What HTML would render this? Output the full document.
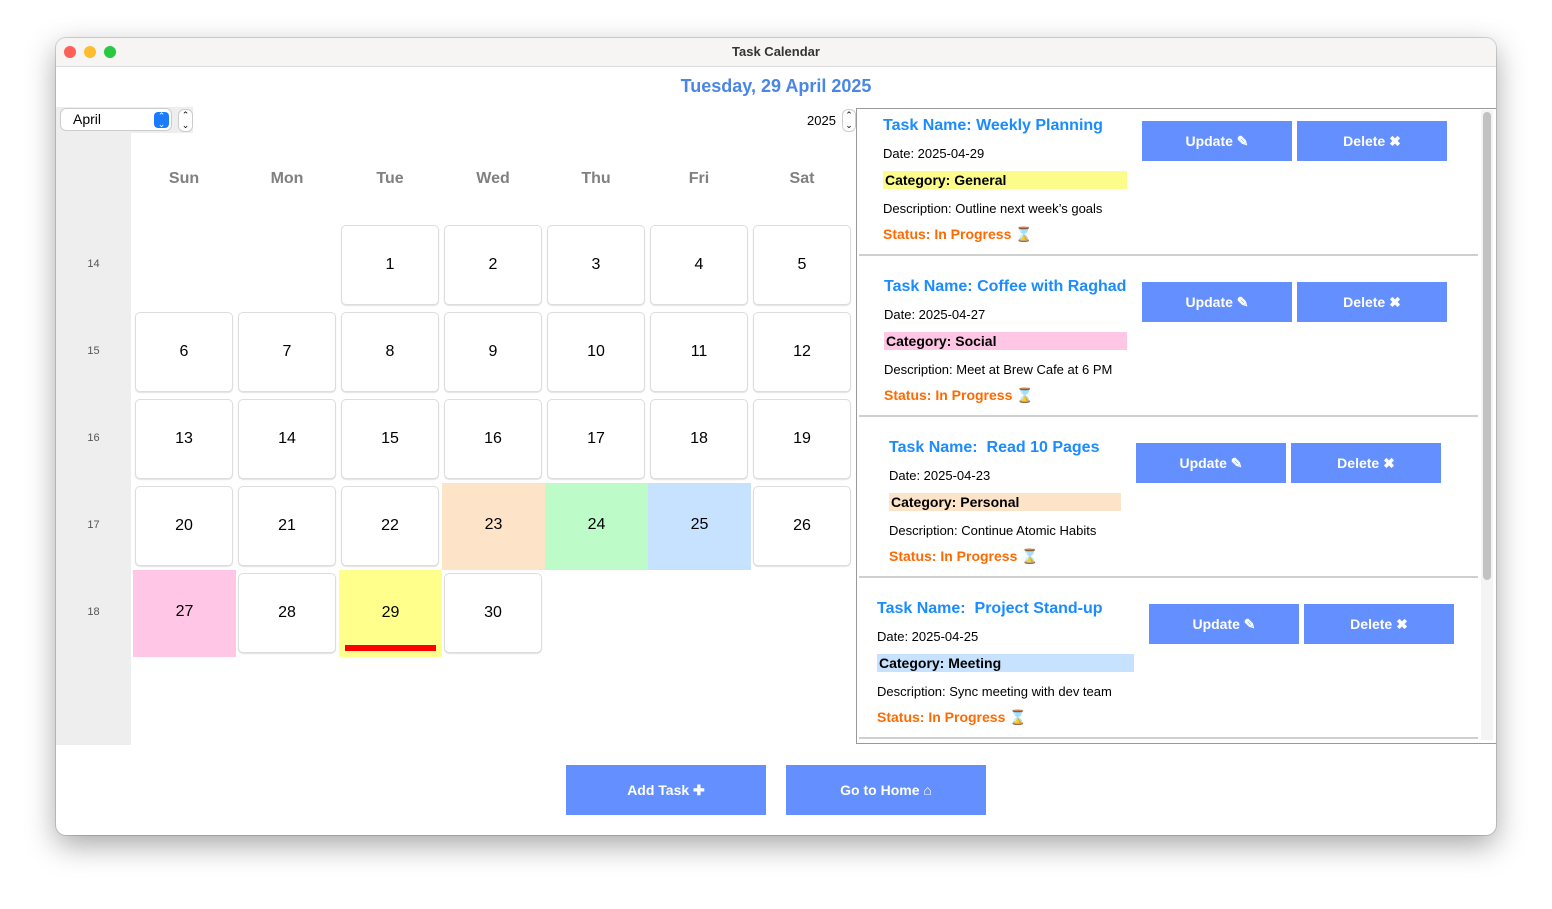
<!DOCTYPE html>
<html><head><meta charset="utf-8"><style>
*{margin:0;padding:0;box-sizing:border-box}
body{width:1552px;height:909px;background:#fff;position:relative;font-family:"Liberation Sans",sans-serif;overflow:hidden}
.win{position:absolute;left:56px;top:38px;width:1440px;height:797px;background:#fff;border-radius:10px;box-shadow:0 10px 30px rgba(0,0,0,.35),0 0 0 1px rgba(0,0,0,.15);overflow:hidden}
.tb{position:absolute;left:0;top:0;width:1440px;height:29px;background:#f6f5f3;border-bottom:1px solid #dcdcdc;text-align:center;font-size:13px;font-weight:bold;color:#333;line-height:28px}
.dot{position:absolute;top:8px;width:12px;height:12px;border-radius:50%}
.a{position:absolute}
.cell{position:absolute;width:98px;height:80px;border:1px solid #ddd;border-radius:5px;background:#fff;box-shadow:0 1px 1px rgba(0,0,0,.12);text-align:center;line-height:78px;font-size:16px;color:#000}
.fill{position:absolute;width:103px;height:87px;text-align:center;line-height:84px;font-size:16px}
.dh{position:absolute;top:170px;width:98px;text-align:center;font-size:16px;font-weight:bold;color:#808080}
.wk{position:absolute;left:0;width:75px;text-align:center;font-size:11px;color:#555}
.tn{position:absolute;font-size:16px;font-weight:bold;color:#1a8cff}
.t{position:absolute;font-size:13px;color:#000}
.cat{position:absolute;height:18px;font-size:14px;font-weight:bold;padding-left:2px;line-height:18px}
.st{position:absolute;font-size:14px;font-weight:bold;color:#ff6a00}
.btn{position:absolute;width:150px;height:40px;background:#648ffe;color:#fff;font-weight:bold;font-size:14px;text-align:center;line-height:40px}
.sep{position:absolute;left:859px;width:619px;height:2px;background:#d0d0d0}
</style></head><body>
<div class="win">
<div class="tb">Task Calendar
<div class="dot" style="left:8px;background:#fe5f57"></div>
<div class="dot" style="left:28px;background:#febc2e"></div>
<div class="dot" style="left:48px;background:#28c840"></div>
</div>
</div>
<div class="a" style="left:0;top:76px;width:1552px;text-align:center;font-size:18px;font-weight:bold;color:#4a86e8">Tuesday, 29 April 2025</div>
<div class="a" style="left:56px;top:107px;width:137px;height:26px;background:#eee"></div>
<div class="a" style="left:56px;top:133px;width:75px;height:612px;background:#eee"></div>
<div class="a" style="left:61px;top:109px;width:110px;height:21px;background:#fff;border-radius:5px;box-shadow:0 0 0 1px #ccc;font-size:14px;line-height:21px;padding-left:12px">April</div>
<div class="a" style="left:154px;top:112px;width:15px;height:16px;background:#1a7cfa;border-radius:4px;color:#fff;font-size:9px;text-align:center;line-height:8px">⌃<br>⌄</div>
<div class="a" style="left:179px;top:110px;width:13px;height:21px;background:#fff;border-radius:5px;box-shadow:0 0 0 1px #ccc;font-size:9px;text-align:center;line-height:10px">⌃<br>⌄</div>
<div class="a" style="left:807px;top:113px;font-size:13px">2025</div>
<div class="a" style="left:843px;top:110px;width:12px;height:21px;background:#fff;border-radius:5px;box-shadow:0 0 0 1px #ccc;font-size:9px;text-align:center;line-height:10px">⌃<br>⌄</div>

<div class="dh" style="left:135px">Sun</div><div class="dh" style="left:238px">Mon</div><div class="dh" style="left:341px">Tue</div><div class="dh" style="left:444px">Wed</div><div class="dh" style="left:547px">Thu</div><div class="dh" style="left:650px">Fri</div><div class="dh" style="left:753px">Sat</div>
<div class="wk" style="left:56px;top:258px">14</div><div class="wk" style="left:56px;top:345px">15</div><div class="wk" style="left:56px;top:432px">16</div><div class="wk" style="left:56px;top:519px">17</div><div class="wk" style="left:56px;top:606px">18</div>

<div class="cell" style="left:341px;top:225px">1</div><div class="cell" style="left:444px;top:225px">2</div><div class="cell" style="left:547px;top:225px">3</div><div class="cell" style="left:650px;top:225px">4</div><div class="cell" style="left:753px;top:225px">5</div>
<div class="cell" style="left:135px;top:312px">6</div><div class="cell" style="left:238px;top:312px">7</div><div class="cell" style="left:341px;top:312px">8</div><div class="cell" style="left:444px;top:312px">9</div><div class="cell" style="left:547px;top:312px">10</div><div class="cell" style="left:650px;top:312px">11</div><div class="cell" style="left:753px;top:312px">12</div>
<div class="cell" style="left:135px;top:399px">13</div><div class="cell" style="left:238px;top:399px">14</div><div class="cell" style="left:341px;top:399px">15</div><div class="cell" style="left:444px;top:399px">16</div><div class="cell" style="left:547px;top:399px">17</div><div class="cell" style="left:650px;top:399px">18</div><div class="cell" style="left:753px;top:399px">19</div>
<div class="cell" style="left:135px;top:486px">20</div><div class="cell" style="left:238px;top:486px">21</div><div class="cell" style="left:341px;top:486px">22</div>
<div class="fill" style="left:442px;top:483px;background:#fde3c8">23</div>
<div class="fill" style="left:545px;top:483px;background:#bdfcc9">24</div>
<div class="fill" style="left:648px;top:483px;background:#c7e2fe">25</div>
<div class="cell" style="left:753px;top:486px">26</div>
<div class="fill" style="left:133px;top:570px;background:#ffc6e6">27</div>
<div class="cell" style="left:238px;top:573px">28</div>
<div class="fill" style="left:339px;top:570px;background:#ffff8c;line-height:86px">29<div class="a" style="left:6px;top:75px;width:91px;height:6px;background:#f00"></div></div>
<div class="cell" style="left:444px;top:573px">30</div>

<div class="a" style="left:856px;top:108px;width:640px;height:636px;border:1px solid #999;border-right:none;background:#fff"></div>
<div class="a" style="left:1481px;top:110px;width:12px;height:630px;background:#f4f4f4"></div>
<div class="a" style="left:1483px;top:112px;width:8px;height:468px;background:#c2c2c2;border-radius:4px"></div>
<div class="sep" style="top:254px"></div><div class="sep" style="top:415px"></div><div class="sep" style="top:576px"></div><div class="sep" style="top:737px"></div>

<div class="tn" style="left:883px;top:117px">Task Name: Weekly Planning</div>
<div class="t" style="left:883px;top:146px">Date: 2025-04-29</div>
<div class="cat" style="left:883px;top:171px;width:244px;background:#fcfc8b">Category: General</div>
<div class="t" style="left:883px;top:201px">Description: Outline next week’s goals</div>
<div class="st" style="left:883px;top:226px">Status: In Progress ⌛</div>
<div class="btn" style="left:1142px;top:121px">Update ✎</div><div class="btn" style="left:1297px;top:121px">Delete ✖</div>

<div class="tn" style="left:884px;top:278px">Task Name: Coffee with Raghad</div>
<div class="t" style="left:884px;top:307px">Date: 2025-04-27</div>
<div class="cat" style="left:884px;top:332px;width:243px;background:#ffc6e6">Category: Social</div>
<div class="t" style="left:884px;top:362px">Description: Meet at Brew Cafe at 6 PM</div>
<div class="st" style="left:884px;top:387px">Status: In Progress ⌛</div>
<div class="btn" style="left:1142px;top:282px">Update ✎</div><div class="btn" style="left:1297px;top:282px">Delete ✖</div>

<div class="tn" style="left:889px;top:439px">Task Name:&nbsp; Read 10 Pages</div>
<div class="t" style="left:889px;top:468px">Date: 2025-04-23</div>
<div class="cat" style="left:889px;top:493px;width:232px;background:#fde3c8">Category: Personal</div>
<div class="t" style="left:889px;top:523px">Description: Continue Atomic Habits</div>
<div class="st" style="left:889px;top:548px">Status: In Progress ⌛</div>
<div class="btn" style="left:1136px;top:443px">Update ✎</div><div class="btn" style="left:1291px;top:443px">Delete ✖</div>

<div class="tn" style="left:877px;top:600px">Task Name:&nbsp; Project Stand-up</div>
<div class="t" style="left:877px;top:629px">Date: 2025-04-25</div>
<div class="cat" style="left:877px;top:654px;width:257px;background:#c7e2fe">Category: Meeting</div>
<div class="t" style="left:877px;top:684px">Description: Sync meeting with dev team</div>
<div class="st" style="left:877px;top:709px">Status: In Progress ⌛</div>
<div class="btn" style="left:1149px;top:604px">Update ✎</div><div class="btn" style="left:1304px;top:604px">Delete ✖</div>

<div class="btn" style="left:566px;top:765px;width:200px;height:50px;line-height:50px">Add Task ✚</div>
<div class="btn" style="left:786px;top:765px;width:200px;height:50px;line-height:50px">Go to Home ⌂</div>
</body></html>
